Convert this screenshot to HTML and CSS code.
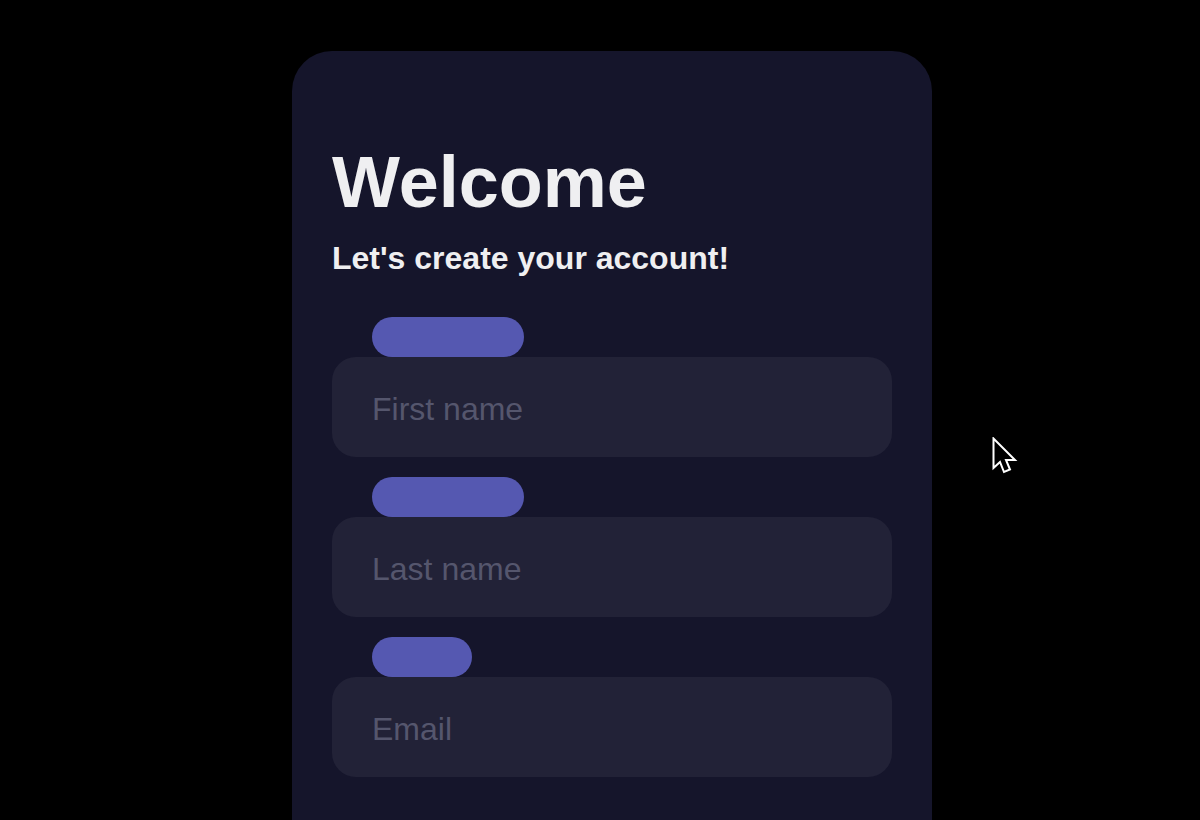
FILE: index.html
```html
<!DOCTYPE html>
<html lang="en">
<head>
<meta charset="utf-8">
<title>Welcome</title>
<link rel="stylesheet" href="styles.css">
</head>
<body>
<main class="page">
  <section class="card">
    <h1 class="title">Welcome</h1>
    <p class="subtitle">Let's create your account!</p>
    <form class="form">
      <div class="field">
        <span class="tag tag-wide"></span>
        <input class="input" type="text" placeholder="First name">
      </div>
      <div class="field">
        <span class="tag tag-wide"></span>
        <input class="input" type="text" placeholder="Last name">
      </div>
      <div class="field">
        <span class="tag tag-narrow"></span>
        <input class="input" type="email" placeholder="Email">
      </div>
    </form>
  </section>
</main>
<svg class="cursor" width="26" height="38" viewBox="0 0 26 38" aria-hidden="true">
  <polygon points="1.5,1.5 1.5,31 8,25 12,35 18,32.5 14,23 23,23" fill="#000" stroke="#fff" stroke-width="2" stroke-linejoin="miter"/>
</svg>
</body>
</html>
```

FILE: styles.css
```css
html, body {
  margin: 0;
  padding: 0;
  background: #000;
  height: 100%;
  overflow: hidden;
}

body {
  font-family: "Liberation Sans", Arial, Helvetica, sans-serif;
  color: #efeff1;
}

.page {
  padding-top: 51px;
  padding-left: 292px;
}

.card {
  width: 640px;
  box-sizing: border-box;
  background: #15152b;
  border-radius: 40px;
  padding: 91px 40px 120px;
}

.title {
  margin: 0;
  font-size: 72px;
  line-height: 80px;
  font-weight: 700;
  color: #efeff1;
}

.subtitle {
  margin: 16px 0 0;
  font-size: 32px;
  line-height: 40px;
  font-weight: 700;
  color: #efeff1;
}

.form {
  margin-top: 39px;
  display: flex;
  flex-direction: column;
  gap: 20px;
}

.field {
  display: flex;
  flex-direction: column;
  align-items: flex-start;
}

.tag {
  display: block;
  height: 40px;
  margin-left: 40px;
  border-radius: 20px;
  background: #5558b1;
}

.tag-wide { width: 152px; }
.tag-narrow { width: 100px; }

.input {
  width: 560px;
  height: 100px;
  box-sizing: border-box;
  border: none;
  outline: none;
  border-radius: 24px;
  background: #222237;
  padding: 4px 40px 0;
  font-family: "Liberation Sans", Arial, Helvetica, sans-serif;
  font-size: 32px;
  color: #efeff1;
}

.input::placeholder {
  color: #55566d;
}

.cursor {
  position: absolute;
  left: 992px;
  top: 437px;
}
```
